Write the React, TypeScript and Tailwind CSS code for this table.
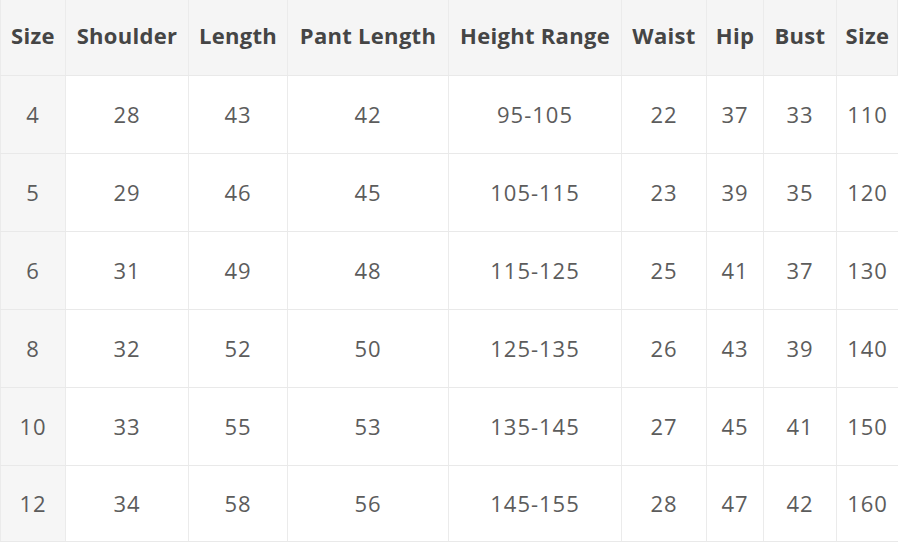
const headers = ["Size", "Shoulder", "Length", "Pant Length", "Height Range", "Waist", "Hip", "Bust", "Size"];

const rows = [
  ["4", "28", "43", "42", "95-105", "22", "37", "33", "110"],
  ["5", "29", "46", "45", "105-115", "23", "39", "35", "120"],
  ["6", "31", "49", "48", "115-125", "25", "41", "37", "130"],
  ["8", "32", "52", "50", "125-135", "26", "43", "39", "140"],
  ["10", "33", "55", "53", "135-145", "27", "45", "41", "150"],
  ["12", "34", "58", "56", "145-155", "28", "47", "42", "160"],
];

const cols = "grid grid-cols-[65px_123px_99px_161px_173px_85px_57px_73px_62px]";

export default function App() {
  return (
    <div className="w-[900px] h-[543px] bg-white overflow-hidden" style={{ fontFamily: '"Open Sans", sans-serif' }}>
      <div className="w-[898px] border-b border-r border-[#e9e9e9]">
        <div className={`${cols} h-[75px] bg-[#f5f5f5]`}>
          {headers.map((h, i) => (
            <div
              key={i}
              className="flex items-center justify-center pb-1 border-l border-[#ebebeb] text-[22px] font-bold text-[#454545] whitespace-nowrap tracking-[0.3px]"
            >
              {h}
            </div>
          ))}
        </div>
        {rows.map((r, ri) => (
          <div key={ri} className={`${cols} ${ri === rows.length - 1 ? "h-[76px]" : "h-[78px]"} border-t border-[#e9e9e9]`}>
            {r.map((c, ci) => (
              <div
                key={ci}
                className={`flex items-center justify-center border-l border-[#ebebeb] text-[22px] text-[#5c5c5c] tracking-[1px] ${ci === 0 ? "bg-[#f6f6f6]" : "bg-white"}`}
              >
                {c}
              </div>
            ))}
          </div>
        ))}
      </div>
    </div>
  );
}
